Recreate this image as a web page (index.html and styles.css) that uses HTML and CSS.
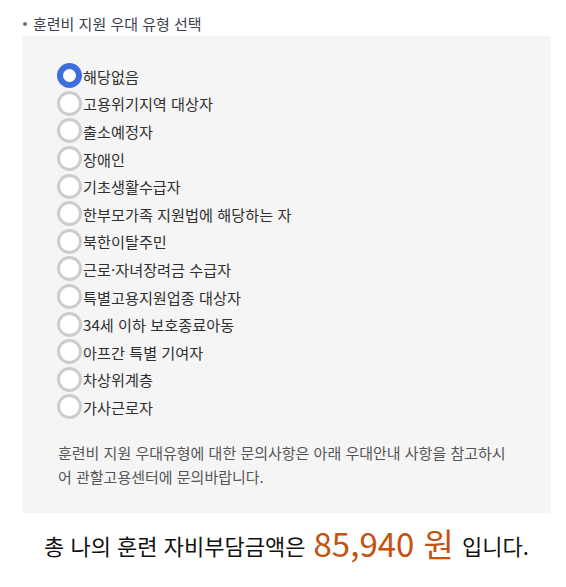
FILE: index.html
```html
<!DOCTYPE html>
<html lang="ko">
<head>
<meta charset="utf-8">
<link rel="stylesheet" href="styles.css">
</head>
<body>
<div class="page">
  <h3 class="title"><span class="dot"></span>훈련비 지원 우대 유형 선택</h3>
  <div class="box">
    <ul class="options">
      <li class="opt"><span class="radio checked"></span><span>해당없음</span></li>
      <li class="opt"><span class="radio"></span><span>고용위기지역 대상자</span></li>
      <li class="opt"><span class="radio"></span><span>출소예정자</span></li>
      <li class="opt"><span class="radio"></span><span>장애인</span></li>
      <li class="opt"><span class="radio"></span><span>기초생활수급자</span></li>
      <li class="opt"><span class="radio"></span><span>한부모가족 지원법에 해당하는 자</span></li>
      <li class="opt"><span class="radio"></span><span>북한이탈주민</span></li>
      <li class="opt"><span class="radio"></span><span>근로·자녀장려금 수급자</span></li>
      <li class="opt"><span class="radio"></span><span>특별고용지원업종 대상자</span></li>
      <li class="opt"><span class="radio"></span><span>34세 이하 보호종료아동</span></li>
      <li class="opt"><span class="radio"></span><span>아프간 특별 기여자</span></li>
      <li class="opt"><span class="radio"></span><span>차상위계층</span></li>
      <li class="opt"><span class="radio"></span><span>가사근로자</span></li>
    </ul>
    <p class="note">훈련비 지원 우대유형에 대한 문의사항은 아래 우대안내 사항을 참고하시어 관할고용센터에 문의바랍니다.</p>
  </div>
  <p class="total">총 나의 훈련 자비부담금액은 <strong class="amount">85,940 원</strong> 입니다.</p>
</div>
</body>
</html>
```
FILE: styles.css
```css
* { box-sizing: border-box; }
html, body { margin: 0; padding: 0; background: #fff; }
body { font-family: "Noto Sans CJK KR", "Noto Sans", sans-serif; color: #333; }
.page { width: 566px; padding: 13px 15px 0 22px; }
.title {
  margin: 0;
  display: flex;
  align-items: center;
  gap: 6px;
  font-size: 15px;
  font-weight: 400;
  line-height: 22px;
  color: #3a3f4e;
}
.dot { width: 4px; height: 4px; border-radius: 50%; background: #6a6f7a; margin-left: 1px; }
.box {
  margin-top: 1px;
  background: #f5f5f5;
  padding: 26px 42px 24px 35px;
}
.options { list-style: none; margin: 0; padding: 0; }
.opt {
  display: flex;
  align-items: center;
  height: 27.6px;
  font-size: 15.2px;
  color: #2f2f2f;
}
.radio {
  width: 25px;
  height: 25px;
  border-radius: 50%;
  background: #fff;
  border: 3px solid #cccccc;
  flex: none;
  margin-right: 1px;
}
.radio.checked { border: 6px solid #3d6fde; }
.note {
  margin: 20px 0 0 1px;
  font-size: 15px;
  line-height: 24px;
  color: #555;
}
.total {
  margin: 12px 0 0;
  text-align: center;
  font-size: 22px;
  line-height: 36px;
  color: #111;
}
.amount { font-weight: 400; font-size: 33px; color: #c4520e; margin: 0 2px; vertical-align: -2px; }
```
